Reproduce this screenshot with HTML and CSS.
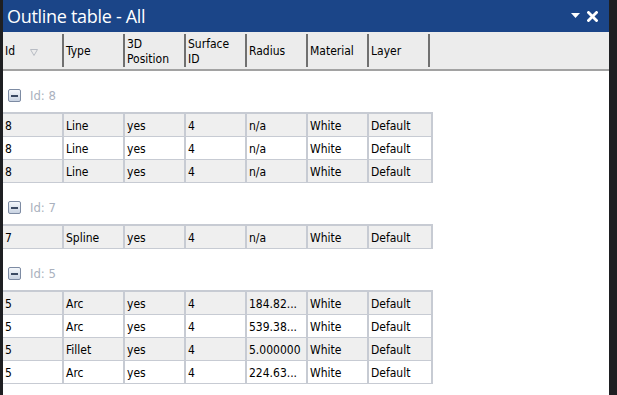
FILE: index.html
```html
<!DOCTYPE html>
<html lang="en">
  <head>
    <meta charset="UTF-8" />
    <title>Outline table - All</title>
    <link rel="stylesheet" href="styles.css">
  </head>
  <body>
    <div class="panel">
      <div class="titlebar">
        <span class="title">Outline table - All</span>
        <span class="tools">
          <svg width="9" height="6" viewBox="0 0 9 6"><path d="M0 0h9L4.5 5z" fill="#fff"/></svg>
          <svg width="11" height="11" viewBox="0 0 11 11"><path d="M1.5 1.5l8 8M9.5 1.5l-8 8" stroke="#fff" stroke-width="2.8" stroke-linecap="square"/></svg>
        </span>
      </div>

      <div class="head">
        <div class="hcell">Id <svg class="sort" width="8" height="7" viewBox="0 0 8 7"><path d="M0.5 0.5h7L4 6.5z" fill="none" stroke="#b8bcc4"/></svg></div>
        <div class="hcell">Type</div>
        <div class="hcell">3D<br>Position</div>
        <div class="hcell">Surface<br>ID</div>
        <div class="hcell">Radius</div>
        <div class="hcell">Material</div>
        <div class="hcell">Layer</div>
      </div>

      <div class="body">
        <div class="group">
          <div class="ghead"><span class="toggle"></span>Id: 8</div>
          <div class="rows">
            <div class="row"><span>8</span><span>Line</span><span>yes</span><span>4</span><span>n/a</span><span>White</span><span>Default</span></div>
            <div class="row"><span>8</span><span>Line</span><span>yes</span><span>4</span><span>n/a</span><span>White</span><span>Default</span></div>
            <div class="row"><span>8</span><span>Line</span><span>yes</span><span>4</span><span>n/a</span><span>White</span><span>Default</span></div>
          </div>
        </div>

        <div class="group">
          <div class="ghead"><span class="toggle"></span>Id: 7</div>
          <div class="rows">
            <div class="row"><span>7</span><span>Spline</span><span>yes</span><span>4</span><span>n/a</span><span>White</span><span>Default</span></div>
          </div>
        </div>

        <div class="group">
          <div class="ghead"><span class="toggle"></span>Id: 5</div>
          <div class="rows">
            <div class="row"><span>5</span><span>Arc</span><span>yes</span><span>4</span><span>184.82...</span><span>White</span><span>Default</span></div>
            <div class="row"><span>5</span><span>Arc</span><span>yes</span><span>4</span><span>539.38...</span><span>White</span><span>Default</span></div>
            <div class="row"><span>5</span><span>Fillet</span><span>yes</span><span>4</span><span>5.000000</span><span>White</span><span>Default</span></div>
            <div class="row"><span>5</span><span>Arc</span><span>yes</span><span>4</span><span>224.63...</span><span>White</span><span>Default</span></div>
          </div>
        </div>
      </div>
    </div>
  </body>
</html>
```

FILE: styles.css
```css
html,
body {
  margin: 0;
  padding: 0;
  height: 100%;
  background: #1e1f22;
  overflow: hidden;
  font: 12px "DejaVu Sans Condensed", "DejaVu Sans", sans-serif;
  color: #000;
}

.panel {
  height: 100%;
  margin: 0 8px 0 3px;
  display: flex;
  flex-direction: column;
  background: #fff;
}

.titlebar {
  height: 32px;
  flex: none;
  display: flex;
  align-items: center;
  justify-content: space-between;
  padding: 0 11px 0 4px;
  background: #1b4588;
  color: #fff;
}
.title {
  font: 18px "Open Sans", "Noto Sans", sans-serif;
  letter-spacing: -0.3px;
}
.tools {
  display: flex;
  align-items: center;
  gap: 7px;
}

.head {
  height: 37px;
  flex: none;
  display: grid;
  grid-template-columns: repeat(7, 61px);
  background: #ececec;
  border-bottom: 2px solid #a2a2a2;
}
.hcell {
  display: flex;
  align-items: center;
  gap: 15px;
  padding: 2px 2px 0;
  margin: 2px 0;
  line-height: 15px;
  border-right: 2px solid #707070;
}
.sort {
  margin-top: 2px;
}

.body {
  flex: 1;
}

.ghead {
  height: 41px;
  box-sizing: border-box;
  display: flex;
  align-items: flex-end;
  gap: 9px;
  padding: 0 0 9px 5px;
  font-size: 13px;
  color: #aab1be;
}
.toggle {
  position: relative;
  width: 11px;
  height: 11px;
  flex: none;
  margin-bottom: 1px;
  border: 1px solid #7d8ba3;
  border-radius: 2px;
  background: linear-gradient(#f4f7fb, #c9d3e2);
}
.toggle::after {
  content: "";
  position: absolute;
  left: 2px;
  right: 2px;
  top: 5px;
  height: 2px;
  background: #3b4a63;
}

.rows {
  width: 428px;
  border-top: 2px solid #c7cbd3;
  border-right: 2px solid #c7cbd3;
}
.row {
  display: grid;
  grid-template-columns: repeat(7, 61px);
  height: 23px;
  box-sizing: border-box;
  border-bottom: 1px solid #c7cbd3;
  background: #efefef;
}
.row:nth-child(even) {
  background: #fff;
}
.row span {
  display: flex;
  align-items: center;
  padding: 1px 0 0 2px;
  border-right: 2px solid #c7cbd3;
  white-space: nowrap;
  overflow: hidden;
}
.row span:last-child {
  border-right: none;
}
```
